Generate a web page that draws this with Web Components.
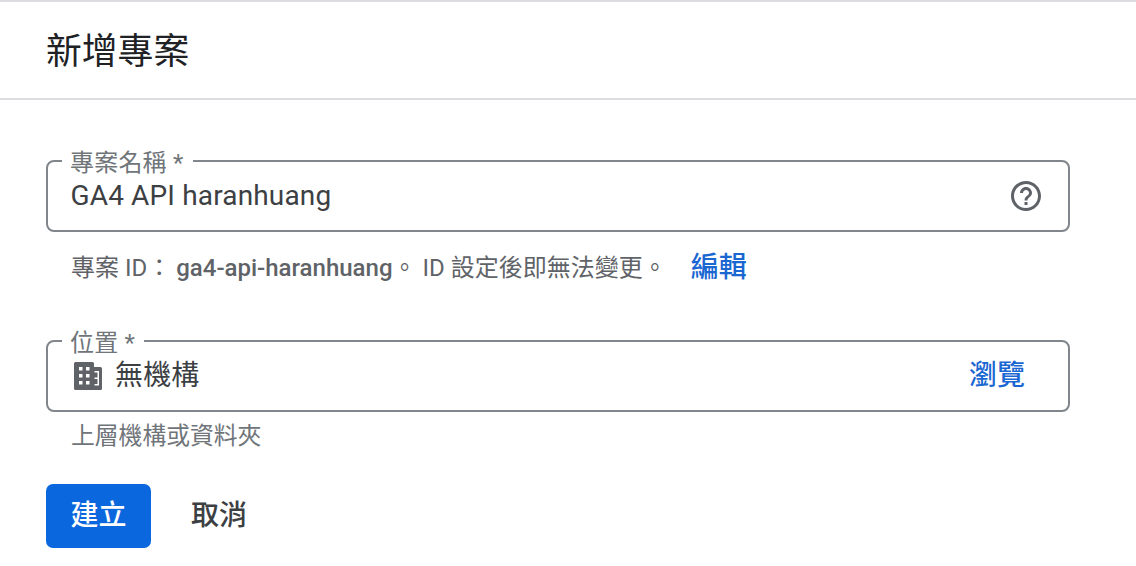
<!DOCTYPE html>
<html lang="zh-Hant"><head><meta charset="utf-8"><style>
html,body{margin:0;padding:0;background:#fff;overflow:hidden}
body{font-family:Roboto,"Noto Sans CJK TC",sans-serif;width:1136px;height:566px}
</style></head><body>
<new-project-dialog>
  <form-field label="專案名稱 *" slot="name">
    <span>GA4 API haranhuang</span>
    <svg slot="end" width="36" height="36" viewBox="0 0 24 24" fill="#5f6368"><path d="M11 18h2v-2h-2v2zm1-16C6.48 2 2 6.48 2 12s4.48 10 10 10 10-4.48 10-10S17.52 2 12 2zm0 18c-4.41 0-8-3.59-8-8s3.59-8 8-8 8 3.59 8 8-3.59 8-8 8zm0-14c-2.21 0-4 1.790-4 4h2c0-1.1.9-2 2-2s2 .9 2 2c0 2-3 1.750-3 5h2c0-2.250 3-2.500 3-5 0-2.210-1.790-4-4-4z"/></svg>
  </form-field>
  <hint-line slot="id"></hint-line>
  <form-field label="位置 *" slot="loc" class="loc">
    <svg slot="start" width="28" height="28" viewBox="0 0 28 28" fill="#5f6368"><path fill-rule="evenodd" d="M1.500 0h17a1.500 1.500 0 0 1 1.500 1.500V5h6.500A1.500 1.500 0 0 1 28 6.500v20a1.500 1.500 0 0 1-1.500 1.500h-25A1.500 1.500 0 0 1 0 26.500v-25A1.500 1.500 0 0 1 1.500 0zM5 5v3.500h3.500V5zm7 0v3.500h3.500V5zM5 12v3.500h3.500V12zm7 0v3.500h3.500V12zM5 19v3.500h3.500V19zm7 0v3.500h3.500V19zM20.500 9v1.500h3v5h-3V17h3v5h-3v1.500H25V9z"/></svg>
    <span>無機構</span>
    <a slot="end">瀏覽</a>
  </form-field>
</new-project-dialog>
<script>
customElements.define('form-field',class extends HTMLElement{
  constructor(){super();this.attachShadow({mode:'open'}).innerHTML=`<style>
  :host{display:block;position:relative;box-sizing:border-box;width:1024px;height:72px;border:2px solid #80868b;border-radius:8px;color:#3c4043;font-size:28px;letter-spacing:.15px;line-height:32px}
  :host(.loc) .row{padding-right:43px;padding-left:26px}
  :host(.loc) span{padding-top:1px}
  .row{display:flex;align-items:center;height:100%;padding:0 24px 0 22.500px;box-sizing:border-box}
  .main{flex:1;display:flex;align-items:center;gap:13px}
  .lab{position:absolute;left:14px;top:-13px;background:#fff;padding:0 9px 0 8px;font-size:24px;letter-spacing:.2px;line-height:28px;color:#70757a;white-space:nowrap}
  ::slotted(svg){display:block}
  ::slotted(span){padding-top:0}
  ::slotted(a){color:#1a67d2;font-weight:500;font-size:28px;letter-spacing:0}
  </style><div class="lab"></div><div class="row"><div class="main"><slot name="start"></slot><slot></slot></div><slot name="end"></slot></div>`;
  }
  connectedCallback(){this.shadowRoot.querySelector('.lab').textContent=this.getAttribute('label')}
});
customElements.define('hint-line',class extends HTMLElement{
  constructor(){super();this.attachShadow({mode:'open'}).innerHTML=`<style>
  :host{display:flex;align-items:center;font-size:24px;line-height:32px;color:#5f6368;white-space:nowrap}
  b{font-weight:500;margin-left:5px}
  a{color:#1a67d2;font-weight:500;font-size:28px;margin-left:24px;padding-top:1px}
  </style><span>專案 ID：</span><b>ga4-api-haranhuang</b><span>。 ID 設定後即無法變更。</span><a>編輯</a>`;
  }
});
customElements.define('new-project-dialog',class extends HTMLElement{
  constructor(){super();this.attachShadow({mode:'open'}).innerHTML=`<style>
  :host{display:block;width:1136px;height:566px;box-sizing:border-box;border-top:2px solid #dadce0;color:#202124}
  header{height:98px;box-sizing:border-box;border-bottom:2px solid #dadce0;padding:3px 46px 0;display:flex;align-items:center;font-size:35.800px;font-weight:400;line-height:44px}
  main{padding:60px 46px 0}
  .hint{margin:19px 0 0 25px;height:32px}
  .sec{margin-top:57px}
  .parent{margin:8px 0 0 25px;font-size:23.800px;line-height:32px;color:#70757a}
  .acts{display:flex;align-items:center;margin-top:32px;gap:40px}
  button{all:unset;font:inherit;font-size:28px;font-weight:500;line-height:32px}
  .pri{background:#0b67dd;color:#fff;width:105px;height:64px;border-radius:7px;text-align:center}
  .sec-btn{color:#3c4043}
  </style><header>新增專案</header><main>
  <slot name="name"></slot>
  <div class="hint"><slot name="id"></slot></div>
  <div class="sec"><slot name="loc"></slot></div>
  <div class="parent">上層機構或資料夾</div>
  <div class="acts"><button class="pri">建立</button><button class="sec-btn">取消</button></div>
  </main>`;
  }
});
</script>
</body></html>
